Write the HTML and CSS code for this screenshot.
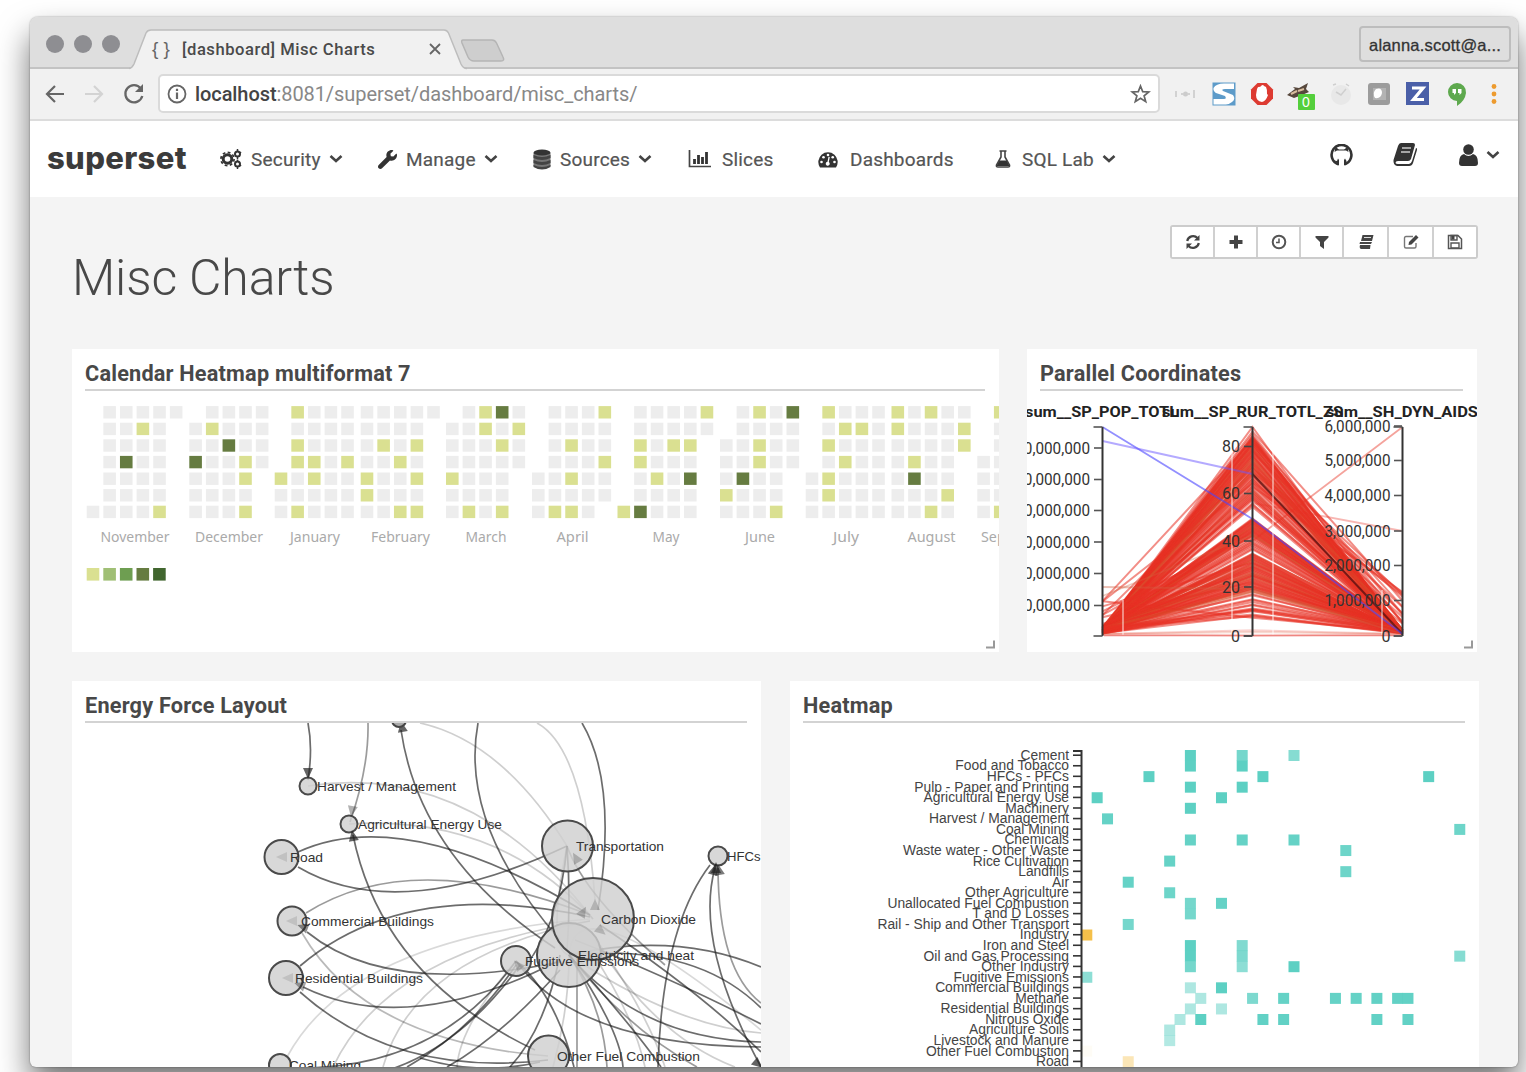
FILE: index.html
```html
<!DOCTYPE html>
<html lang="en">
<head>
<meta charset="utf-8">
<title>[dashboard] Misc Charts</title>
<link rel="stylesheet" href="styles.css">
</head>
<body>
<div class="window">
  <header class="tabbar">
    <span class="lights"><i></i><i></i><i></i></span>
    <div class="tab">
      <svg class="tab-shape" width="370" height="41" viewBox="0 0 370 41"><path d="M0 40 Q3 40 5 35 L17 4 Q18.500 1 22 1 H315 Q318 1 319.500 4 L332 35 Q334 39.500 338 40 V41 H0Z" fill="#f1f1f1"/><path d="M0 39.500 Q3 39 5 35 L17 4 Q18.500 1 22 1 H315 Q318 1 319.500 4 L332 35 Q334 39.500 338 39.500" fill="none" stroke="#bdbdbd" stroke-width="1.500"/><path d="M333 12 H362 Q365 12 366.500 15 L373 29 Q375 33 371 33 H344 Q340 33 338 29 L332 15 Q331 12 333 12Z" transform="translate(1 -1)" fill="#cecece" stroke="#b5b5b5" stroke-width="1.500"/></svg>
      <span class="braces">{ }</span><span class="tab-title">[dashboard] Misc Charts</span>
      <svg class="tab-close" width="12" height="12" viewBox="0 0 12 12"><path d="M1 1 11 11M11 1 1 11" stroke="#666" stroke-width="1.800"/></svg>
    </div>
    <span class="profile">alanna.scott@a...</span>
  </header>

  <div class="toolbar">
    <svg width="20" height="20" viewBox="0 0 20 20"><path d="M19 10H2M10 2 2 10l8 8" fill="none" stroke="#666" stroke-width="2.200"/></svg>
    <svg width="20" height="20" viewBox="0 0 20 20"><path d="M1 10H18M10 2l8 8-8 8" fill="none" stroke="#d3d3d3" stroke-width="2.200"/></svg>
    <svg width="22" height="22" viewBox="0 0 22 22"><path d="M17.800 5.500A8.600 8.600 0 1 0 19.300 13" fill="none" stroke="#666" stroke-width="2.300"/><path d="M20 1v8h-8z" fill="#666"/></svg>
    <div class="address">
      <svg width="20" height="20" viewBox="0 0 20 20"><circle cx="10" cy="10" r="8.500" fill="none" stroke="#666" stroke-width="1.800"/><path d="M10 8.500V15M10 4.700V7" stroke="#666" stroke-width="2.200"/></svg>
      <span class="url"><b>localhost</b>:8081/superset/dashboard/misc_charts/</span>
      <svg class="star" width="21" height="20" viewBox="0 0 21 20"><path d="M10.500 2 12.700 7.600 18.800 8 14.100 11.800 15.700 17.600 10.500 14.300 5.300 17.600 6.900 11.800 2.200 8 8.300 7.600Z" fill="none" stroke="#666" stroke-width="1.700"/></svg>
    </div>
    <div class="extensions">
      <svg width="24" height="24" viewBox="0 0 24 24"><path d="M3 9v6M21 8v8M8 12h2M15 12h2" stroke="#d2d2d2" stroke-width="2"/><circle cx="12.500" cy="12" r="2.500" fill="#ccc"/></svg>
      <svg width="24" height="24" viewBox="0 0 24 24"><path d="M.5.500h23v23H.5z" fill="#5d9bc9"/><path d="M1.500 6Q4 1.500 12 1.500H22V7H13Q9 7 11 9L21 13Q24 17 20 20T13 22.500H1.500V17H12Q15 17 13 14L4 11Q1 9 1.500 6Z" fill="#fff"/></svg>
      <svg width="24" height="24" viewBox="0 0 24 24"><path d="M7.500 1h9L23 7.500v9L16.500 23h-9L1 16.500v-9z" fill="#dd3b32"/><path d="M7 7Q8 4 10 5L11 4Q13 2 14 4L16 5Q17.500 8 17 12L18 13Q16 19 12 20Q6 19 6 13Z" fill="#fff"/></svg>
      <svg width="32" height="32" viewBox="0 0 32 32"><path d="M1 15 9 9 7 7 13 8 22 3 20 9 23 12 16 15 8 18Z" fill="#57483d"/><path d="M5 14 11 11M12 11l6-2" stroke="#d7bc9d" stroke-width="2"/><rect x="12" y="14" width="17" height="16" rx="1" fill="#54cf3c"/><text x="16" y="27" class="badge-text">0</text></svg>
      <svg width="24" height="24" viewBox="0 0 24 24"><circle cx="12" cy="13" r="10" fill="#e8e8e8"/><path d="M7 10 12 13 17 7M4 3l3-1M17 2l3 2" fill="none" stroke="#cfcfcf" stroke-width="1.500"/></svg>
      <svg width="24" height="24" viewBox="0 0 24 24"><rect x="1" y="1" width="22" height="22" rx="3" fill="#9c9c9c"/><path d="M6 6h13v12H6z" fill="#b3b3b3"/><path d="M9 7Q15 5 15 11 14 17 8 16 5 11 9 7Z" fill="#fff"/></svg>
      <svg width="24" height="24" viewBox="0 0 24 24"><path d="M0 0h23v23H0z" fill="#4a5fa8"/><path d="M6 6H17L7.500 17.500H18" fill="none" stroke="#fff" stroke-width="3.200"/></svg>
      <svg width="24" height="24" viewBox="0 0 24 24"><path d="M12 1a9 9 0 0 0 0 18v5q8-5 9-13A9 9 0 0 0 12 1Z" fill="#5ea94e"/><path d="M7.500 7H11v4l-2 2V11H7.500zM13 7h3.500v4l-2 2V11H13z" fill="#fff"/></svg>
      <svg class="menu-dots" width="8" height="24" viewBox="0 0 8 24"><g fill="#ed9b2f"><circle cx="4" cy="4.500" r="2.400"/><circle cx="4" cy="12" r="2.400"/><circle cx="4" cy="19.500" r="2.400"/></g></svg>
    </div>
  </div>

  <nav class="navbar">
    <span class="brand">superset</span>
    <a class="nav-item security"><svg width="22" height="20" viewBox="0 0 22 20"><circle cx="7.500" cy="10" r="4.300" fill="none" stroke="#333" stroke-width="3"/><circle cx="7.500" cy="10" r="6.600" fill="none" stroke="#333" stroke-width="1.700" stroke-dasharray="2.800 2.380"/><circle cx="17.500" cy="5" r="2.500" fill="none" stroke="#333" stroke-width="2"/><circle cx="17.500" cy="15" r="2.500" fill="none" stroke="#333" stroke-width="2"/><path d="M17.500 0v2M17.500 8v2M17.500 10.500v2M17.500 18v2M21 3l-1 1M21 17l-1-1" stroke="#333" stroke-width="1.500"/></svg><span>Security</span><svg class="caret" width="14" height="10" viewBox="0 0 14 10"><path d="M1.500 2 7 7 12.500 2" /></svg></a>
    <a class="nav-item manage"><svg width="19" height="19" viewBox="0 0 512 512"><path fill="#333" d="M507.730 109.100c-2.240-9.030-13.540-12.090-20.120-5.510l-74.360 74.360-67.880-11.310-11.310-67.880 74.360-74.360c6.620-6.620 3.430-17.900-5.660-20.160-47.380-11.740-99.550.91-136.580 37.930-39.640 39.640-50.550 97.100-34.050 147.200L18.740 402.760c-24.990 24.990-24.990 65.510 0 90.500 24.990 24.990 65.510 24.990 90.500 0l213.210-213.210c50.120 16.710 107.470 5.680 147.370-34.220 37.070-37.070 49.700-89.320 37.910-136.730z"/></svg><span>Manage</span><svg class="caret" width="14" height="10" viewBox="0 0 14 10"><path d="M1.500 2 7 7 12.500 2"/></svg></a>
    <a class="nav-item sources"><svg width="18" height="21" viewBox="0 0 18 21"><path d="M.5 4V17Q9 22 17.500 17V4Z" fill="#777"/><ellipse cx="9" cy="3.500" rx="8.500" ry="3" fill="#333"/><path d="M.5 6Q9 10 17.500 6V9Q9 13 .5 9ZM.5 11Q9 15 17.500 11v3Q9 18 .5 14ZM.5 16Q9 20 17.500 16v2Q9 23 .5 18Z" fill="#444"/></svg><span>Sources</span><svg class="caret" width="14" height="10" viewBox="0 0 14 10"><path d="M1.500 2 7 7 12.500 2"/></svg></a>
    <a class="nav-item slices"><svg width="23" height="18" viewBox="0 0 23 18"><path d="M1.500 0V16.500H23" fill="none" stroke="#444" stroke-width="1.700"/><path d="M6.500 14V9M10.500 14V5M14.500 14V7M18.500 14V2" stroke="#333" stroke-width="2.800"/></svg><span>Slices</span></a>
    <a class="nav-item dashboards"><svg width="20" height="17" viewBox="0 0 20 17"><path d="M2 16.500A9.700 9.700 0 1 1 18 16.500Z" fill="#333"/><g fill="#fff"><circle cx="3.500" cy="11" r="1.300"/><circle cx="5.500" cy="6.300" r="1.300"/><circle cx="10" cy="4" r="1.300"/><circle cx="14.700" cy="6.300" r="1.300"/><circle cx="16.500" cy="11" r="1.300"/><path d="m11.800 6-1 5a2 2 0 1 1-1.300-.3l1-5z"/></g></svg><span>Dashboards</span></a>
    <a class="nav-item lab"><svg width="16" height="18" viewBox="0 0 16 18"><path d="M4.500 1h7M6 1v6L1.500 15Q1 17 3 17H13Q15 17 14.500 15L10 7V1" fill="none" stroke="#444" stroke-width="1.600"/><path d="M4.500 10.500h7L14.500 16H1.500Z" fill="#333"/></svg><span>SQL Lab</span><svg class="caret" width="14" height="10" viewBox="0 0 14 10"><path d="M1.500 2 7 7 12.500 2"/></svg></a>
    <div class="nav-right">
      <svg width="23" height="22" viewBox="0 0 23 22"><path d="M8.300 20.200A9.900 9.900 0 1 1 14.700 20.200" fill="none" stroke="#333" stroke-width="2.600"/><path d="M5.500 3 9 5.500H14L17.500 3 18.500 8 16 6.500H7L4.500 8ZM8 14.500 9 16V21.500L6.500 20.500V18.500L3.800 16.500 7 17ZM15 14.500 14 16V21.500L16.500 20.500V17Z" fill="#333"/></svg>
      <svg width="25" height="23" viewBox="0 0 25 23"><path d="M8 0H20Q22 0 22 2L18 16Q17 18 15 18H5Q2.500 18 2.500 20 3 21 5 21H16Q18 21 19 18L23 5Q24.500 5 24 7L20 20Q19 23 16 23H4Q0 22 .5 17L5 3Q6 0 8 0Z" fill="#333"/><path d="M9 5h9M8 9h9" stroke="#ccc" stroke-width="1.500"/></svg>
      <svg width="19" height="22" viewBox="0 0 19 22"><circle cx="9.500" cy="5.500" r="5.300" fill="#333"/><path d="M5 10Q9.500 14 14 10 19 11 19 19 19 22 16 22H3Q0 22 0 19 0 11 5 10Z" fill="#333"/></svg>
      <svg class="caret" width="14" height="10" viewBox="0 0 14 10"><path d="M1.500 2 7 7 12.500 2"/></svg>
    </div>
  </nav>

  <main class="page">
    <div class="page-head">
      <h1>Misc Charts</h1>
      <div class="actions">
        <button><svg viewBox="0 0 16 16"><path d="M2.200 7A6 6 0 0 1 12.500 4M13.800 9A6 6 0 0 1 3.500 12" fill="none" stroke="#444" stroke-width="2.200"/><path d="M14.500 1v5.500H9zM1.500 15V9.500H7z"/></svg></button>
        <button><svg viewBox="0 0 16 16"><path d="M6 1.500h4V6h4.500v4H10v4.500H6V10H1.500V6H6z"/></svg></button>
        <button><svg viewBox="0 0 16 16"><circle cx="8" cy="8" r="6.300" fill="none" stroke="#555" stroke-width="2"/><path d="M8 4.500V8.500H5" fill="none" stroke="#555" stroke-width="1.500"/></svg></button>
        <button><svg viewBox="0 0 16 16"><path d="M1.500 2h13v1.500L10 8v7l-4-3V8L1.500 3.500z"/></svg></button>
        <button><svg viewBox="0 0 16 16"><path d="M4.500 1H15.500L14 7H3zM2 8H14L13 10H1.500zM2 11H12.500L12 15H3Q1 14 2 11z"/><path d="M6 3.500h7" stroke="#ddd"/></svg></button>
        <button><svg viewBox="0 0 16 16"><path d="M10 2.500H3Q1.500 2.500 1.500 4v8.500Q1.500 14 3 14h8.500Q13 14 13 12.500V9" fill="none" stroke="#777" stroke-width="1.400"/><path d="m6 8 7-7 2.500 2.500-7 7L5.500 11z"/></svg></button>
        <button><svg viewBox="0 0 16 16"><path d="M1.500 1.500h9.500l3.500 3.500v9.500h-13z" fill="none" stroke="#555" stroke-width="1.500"/><path d="M4 1.500h6v4.500H4zM4 9h8v5H4z" fill="none" stroke="#555" stroke-width="1.400"/><path d="M4.500 2h3v3.500h-3z"/></svg></button>
      </div>
    </div>
    <div class="row row-top">
      <section class="card"><h2>Calendar Heatmap multiformat 7</h2><svg id="calendar" width="927" height="261" viewBox="72 391 927 261"></svg></section>
      <section class="card"><h2>Parallel Coordinates</h2><svg id="parallel" width="450" height="261" viewBox="1027 391 450 261"></svg></section>
    </div>
    <div class="row row-bottom">
      <section class="card"><h2>Energy Force Layout</h2><svg id="force" width="689" height="344" viewBox="72 723 689 344"></svg></section>
      <section class="card"><h2>Heatmap</h2><svg id="heatmap" width="689" height="344" viewBox="790 723 689 344"></svg></section>
    </div>
  </main>
</div>
<script src="charts.js"></script>
</body>
</html>
```

FILE: styles.css
```css
* { box-sizing: border-box; }
body {
  margin: 0;
  width: 1526px;
  height: 1072px;
  overflow: hidden;
  background: #fff;
  font-family: Roboto, "Liberation Sans", sans-serif;
  color: #444;
}
.window {
  width: 1488px;
  height: 1050px;
  margin: 17px 0 0 30px;
  overflow: hidden;
  border-radius: 8px 8px 6px 6px;
  background: #f4f4f4;
  box-shadow: 0 0 2px rgba(0,0,0,.4), 0 18px 32px rgba(0,0,0,.55);
}
svg { display: block; flex: none; }

.tabbar {
  display: flex;
  height: 52px;
  padding-left: 16px;
  background: #dedede;
  border-bottom: 2px solid #c3c3c3;
}
.lights { display: flex; gap: 10px; width: 84px; padding-top: 18px; }
.lights i { width: 18px; height: 18px; border-radius: 50%; background: #8e8e92; }
.tab { position: relative; display: flex; align-items: center; width: 380px; height: 41px; margin-top: 12px; padding: 0 0 1px 22px; }
.tab-shape { position: absolute; left: -1px; top: 0; overflow: visible; }
.braces, .tab-title, .tab-close { position: relative; }
.braces { width: 30px; font: 19px "Liberation Sans", sans-serif; color: #666; white-space: nowrap; }
.tab-title { width: 247px; font: 500 16.600px Roboto, sans-serif; letter-spacing: .52px; color: #4a4a4a; white-space: nowrap; }
.profile {
  width: 152px; height: 36px; margin: 9px 7px 0 auto; padding-left: 8px;
  border: 2px solid #bdbdbd; border-radius: 4px;
  font: 16.500px/34px "Liberation Sans", sans-serif; letter-spacing: .2px; color: #333; -webkit-text-stroke: .3px #333; white-space: nowrap;
}

.toolbar {
  display: flex;
  align-items: center;
  height: 52px;
  padding: 0 20px 1px 15px;
  gap: 19px;
  background: #f1f1f1;
  border-bottom: 2px solid #dcdcdc;
}
.address {
  display: flex;
  align-items: center;
  width: 1002px;
  height: 39px;
  margin-left: -6px;
  padding: 0 7px;
  border: 2px solid #dadada;
  border-radius: 5px;
  background: #fff;
}
.url { margin-left: 8px; font: 20px Roboto, sans-serif; letter-spacing: -.08px; color: #888; white-space: nowrap; }
.url b { font-weight: 500; color: #444; }
.star { margin-left: auto; }
.extensions { display: flex; align-items: center; gap: 14.700px; margin-left: -6px; }
.extensions svg:nth-child(4) { margin: 4px -4px 0 -3px; }
.extensions .menu-dots { margin-left: 6px; }
.badge-text { font: 14px "Liberation Sans", sans-serif; fill: #fff; }

.navbar { display: flex; height: 76px; padding-left: 17px; background: #fff; }
.brand { width: 173px; font: 800 31px/74px Inter, sans-serif; letter-spacing: .35px; color: #3b3b3b; }
.nav-item { display: flex; align-items: center; height: 76px; font-size: 19px; letter-spacing: .2px; color: #555; -webkit-text-stroke: .2px #555; }
.nav-item span { white-space: nowrap; }
.caret { margin-left: 8px; fill: none; stroke: #444; stroke-width: 2.600; }
.security { width: 158px; }
.security span { margin-left: 9px; }
.manage { width: 155px; }
.manage span { margin-left: 9px; }
.sources { width: 155px; }
.sources span { margin-left: 9px; }
.slices { width: 130px; }
.slices span { margin-left: 11px; }
.dashboards { width: 177px; }
.dashboards span { margin-left: 12px; }
.lab span { margin-left: 11px; }
.nav-right { display: flex; align-items: center; margin-left: auto; padding: 0 18px 9px 0; }
.nav-right svg:nth-child(2) { margin-left: 40px; }
.nav-right svg:nth-child(3) { margin-left: 41px; }

.page { padding: 28px 0 0 42px; }
.page-head { display: flex; justify-content: space-between; height: 124px; padding-right: 40px; }
h1 { margin: 28px 0 0; font: 300 50px/50px Roboto, sans-serif; letter-spacing: -.15px; color: #484848; }
.actions { display: flex; height: 34px; border: 2px solid #ccc; border-radius: 3px; background: #fff; }
.actions button { display: grid; place-items: center; width: 43px; padding: 0; border: 0; border-right: 2px solid #d0d0d0; background: #fff; }
.actions button:nth-child(n+5) { width: 45px; }
.actions button:last-child { width: 42px; border-right: 0; }
.actions svg { width: 16px; height: 16px; fill: #444; }
.row { display: flex; gap: 28px; }
.row-bottom { margin-top: 29px; gap: 29px; }
.card { overflow: hidden; background: #fff; }
h2 {
  height: 42px; margin: 0 14px 0 13px; padding-top: 10px;
  border-bottom: 2px solid #d3d3d3;
  font: 700 21.700px/30px Roboto, sans-serif; letter-spacing: .2px; color: #484848; white-space: nowrap;
}
.month { font: 14px "Noto Sans", sans-serif; fill: #aaa; text-anchor: middle; }
.tick { font: 16px Roboto, sans-serif; fill: #333; text-anchor: end; }
.dim { font: 700 15.500px Roboto, sans-serif; fill: #222; }
.node { font: 13.600px "Liberation Sans", sans-serif; fill: #333; }
.row-name { font: 13.850px "Liberation Sans", sans-serif; fill: #444; text-anchor: end; }
```

FILE: charts.js
```js
const NS = 'http://www.w3.org/2000/svg';
function add(parent, name, attrs, text) {
  const el = document.createElementNS(NS, name);
  for (const k in attrs) el.setAttribute(k, attrs[k]);
  if (text !== undefined) el.textContent = text;
  parent.appendChild(el);
  return el;
}
function line(parent, x1, y1, x2, y2, stroke, width, extra) {
  return add(parent, 'line', Object.assign({ x1, y1, x2, y2, stroke, 'stroke-width': width }, extra));
}

// Calendar: one string per week column, one letter per weekday
const cal = document.getElementById('calendar');
const fills = { g: '#ededed', y: '#dae091', d: '#667c41' };
const months = [
  [86.7, '......g ggggggg gggdggg gyggggg ggggggy g......', 'November', 135, 69],
  [189.3, '.ggdggg gyggggg ggdgggg gggyygy gggg...', 'December', 229, 68],
  [274.7, '....ygg ygyyggy gggyygg ggggggg gggyggg', 'January', 315, 50],
  [360.7, 'ggggyyg ggygggg gggyggy ggygygy g......', 'February', 400.5, 59],
  [446, '.gggygg ggggggy yyggggg dgygggy gygg...', 'March', 486, 41],
  [532, '....ggg ggggggy ggygygy ggggggg yggygg.', 'April', 572.5, 32],
  [617.5, '......y ggyyggd ggggygg ggygggg ggygdgg yg.....', 'May', 666, 27],
  [720, '..gggyg ggggdgg ygyyggg ggggggy dggg...', 'June', 760, 30],
  [805.7, '....ggg ygygyyg gygyggg gyggggg ggggggg', 'July', 846, 26],
  [891.5, 'yyggggg gggydgg ygggggy gggggyg gyy....', 'August', 931.5, 48],
  [977.3, '...gggg ygggggy ggggggg', 'September', 1018, 74]
];
for (const [x, weeks, name, cx, w] of months) {
  weeks.split(' ').forEach((week, c) => [...week].forEach((v, r) => {
    if (v !== '.') add(cal, 'rect', { x: x + c * 16.63, y: 406.1 + r * 16.6, width: 12.6, height: 12.4, fill: fills[v] });
  }));
  add(cal, 'text', { x: cx, y: 541.5, class: 'month', textLength: w, lengthAdjust: 'spacingAndGlyphs' }, name);
}
['#dae091', '#a0bf75', '#6e9e51', '#667c41', '#41662f'].forEach((fill, i) =>
  add(cal, 'rect', { x: 86.7 + i * 16.6, y: 568, width: 12.6, height: 12.6, fill }));
function grip(svg, x, y) {
  add(svg, 'path', { d: `M${x} ${y - 7}V${y}H${x - 8}`, fill: 'none', stroke: '#999', 'stroke-width': 2 });
}
grip(cal, 994, 647.5);

// Parallel coordinates
const par = document.getElementById('parallel');
const X = [1102.5, 1252.5, 1402.5], TOP = 427, BOT = 636;
let seed = 11;
const rnd = () => (seed = (seed * 16807) % 2147483647) / 2147483647;
const bands = [[427, 436, 3], [436, 446, 14], [446, 476, 32], [477, 501, 20], [502, 508, 3], [518, 536, 26], [536, 550, 10], [553, 592, 52], [594, 596, 2], [599, 602, 3], [604, 606, 2], [608, 612, 5], [614, 618, 4], [630, 636, 3]];
bands.forEach(([a, b, n], k) => {
  for (let i = 0; i < n; i++) {
    const m = a + (b - a) * (i + rnd()) / n;
    const l = BOT - 2 - (k < 13 ? rnd() * 7 + (rnd() < .07 ? rnd() * 30 : 0) : 0);
    const r = BOT - 2 - (k < 13 ? rnd() * 4 + (m < 500 && rnd() < .22 ? rnd() * 45 : 0) : 0);
    add(par, 'polyline', { points: `${X[0]},${l} ${X[1]},${m} ${X[2]},${r}`, fill: 'none', stroke: rnd() < .12 ? '#d9502e' : '#e73224', 'stroke-width': 2, 'stroke-opacity': k === 13 ? .22 : .55 });
  }
});
const fan = (y0, y1, y2, c, o) => add(par, 'polyline', { points: `${X[0]},${y0} ${X[1]},${y1} ${X[2]},${y2}`, fill: 'none', stroke: c, 'stroke-width': 1.8, 'stroke-opacity': o });
fan(632, 541, 427, '#e73224', .45);
fan(630, 503, 531, '#e73224', .35);
fan(587, 589, 634, '#d06040', .4);
fan(596, 535, 630, '#d06040', .35);
add(par, 'path', { d: 'M1252.5 474 1402.5 634', fill: 'none', stroke: '#501010', 'stroke-width': 2, 'stroke-opacity': .75 });
fan(427, 519, 634, '#4a45ff', .6);
add(par, 'path', { d: 'M1102.5 441 1252.5 474', fill: 'none', stroke: '#6a55ff', 'stroke-width': 1.8, 'stroke-opacity': .5 });
for (const [x, a] of [[1123, 600], [1232, 440], [1273, 445], [1382, 590]]) line(par, x, a, x, BOT, '#fff', 1.5, { 'stroke-opacity': .6 });
line(par, 1104, 635.5, 1400, 635.5, '#ef8580', 1.5);
for (const x of X) {
  line(par, x, TOP, x, BOT, '#333', 2);
  line(par, x - 9, TOP, x, TOP, '#555', 1.6);
  line(par, x - 9, BOT, x, BOT, '#555', 1.6);
}
[[448, '1,200,000,000', 95], [479.5, '1,000,000,000', 95], [510.5, '800,000,000', 83], [542, '600,000,000', 83], [573.5, '400,000,000', 83], [605.5, '200,000,000', 83]].forEach(([y, t, w]) => {
  line(par, 1094, y, 1102, y, '#555', 1.6);
  add(par, 'text', { x: 1090, y: y + 5.5, class: 'tick', textLength: w, lengthAdjust: 'spacingAndGlyphs' }, t);
});
[['80', 446.5], ['60', 493.5], ['40', 541], ['20', 587], ['0', 636]].forEach(([t, y]) => {
  line(par, 1244, y, 1252, y, '#444', 1.6);
  add(par, 'text', { x: 1240, y: y + 5.5, class: 'tick' }, t);
});
[['6,000,000', 426], ['5,000,000', 460.5], ['4,000,000', 495.5], ['3,000,000', 531], ['2,000,000', 565.5], ['1,000,000', 600.5], ['0', 636]].forEach(([t, y]) => {
  line(par, 1394, y, 1402, y, '#555', 1.6);
  add(par, 'text', Object.assign({ x: 1390.5, y: y + 5.5, class: 'tick' }, t === '0' ? {} : { textLength: 66, lengthAdjust: 'spacingAndGlyphs' }), t);
});
[['sum__SP_POP_TOTL', 1025, 153], ['sum__SP_RUR_TOTL_ZS', 1162, 181], ['sum__SH_DYN_AIDS', 1326, 152]].forEach(([t, x, w]) =>
  add(par, 'text', { x, y: 417, class: 'dim', textLength: w, lengthAdjust: 'spacingAndGlyphs' }, t));
grip(par, 1472, 647.5);

// Force layout: start, point on the curve, end, shade
const force = document.getElementById('force');
const D = .62, M = .42, L = .2;
const links = [
  [308,723,310.500,750,308,780,D],[368,723,364,770,350,822,M],[401,730,449,849,555,948,D],[478,723,489,828,560,940,D],
  [420,723,498,763,567,846,L],[537,723,575,780,595,900,L],[582,723,604,800,598,910,D],
  [298,852,425,843,590,915,D],[298,867,415,891,567,846,D],[306,913,430,880,590,915,M],[300,966,425,909,590,917,D],
  [307,932,410,972,560,962,D],[303,987,420,1006,560,960,D],[300,992,410,1052,548,1060,D],[353,835,413,960,535,1050,D],
  [302,933,395,1018,548,1056,M*.7],[287,1057,395,963,590,919,L*.8],[333,1067,425,972,590,921,L],[383,1067,450,975,590,921,L],
  [310,1068,428,1039,516,961,D],[350,1078,440,1045,520,965,D],[407,1067,467,1023,516,965,D],[447,1067,503,1027,560,970,D],[510,1067,540,1020,560,955,D],
  [457,1067,473,1020,516,961,L],
  [420,1058,480,1068,540,1062,D],
  [516,961,608,1025,761,1047,D],[516,961,550,1004,574,1067,D],[569,955,653,1019,761,1042,D],[575,940,665,978,761,1024,D],
  [600,925,690,990,761,1052,D],[569,955,670,946,761,967,D],[569,955,680,962,761,1008,D],
  [569,955,608,1020,623,1067,D],[569,955,625,1020,661,1067,D],[577,955,577,1010,577,1067,M],[569,955,596,1010,607,1067,M],
  [569,955,565,1010,553,1067,L],[569,955,630,1020,697,1067,M],[569,955,670,1010,761,1033,L],[600,945,640,1010,665,1067,L],[590,950,625,1010,645,1067,L],[595,940,660,1020,735,1067,L],
  [710,865,673,947,658,1067,D],[715,868,716,955,761,1067,D],[718,868,729,953,761,1003,M],
  [567,846,553,915,525,966,D],[567,846,569,900,567,950,D],[567,846,600,900,665,965,M],
  [308,786,461,807,593,919,L],[349,824,485,843,593,919,L],[569,955,557,925,567,846,L],[569,955,620,935,761,1030,L*.8]
];
for (const [x0, y0, mx, my, x1, y1, o] of links) {
  const cx = 2 * mx - (x0 + x1) / 2, cy = 2 * my - (y0 + y1) / 2;
  add(force, 'path', { d: `M${x0} ${y0}Q${cx} ${cy} ${x1} ${y1}`, fill: 'none', stroke: '#111', 'stroke-width': 1.7, 'stroke-opacity': o });
}
const nodes = [
  [308,786,8.500,'Harvest / Management',317,139],[349,824,8.500,'Agricultural Energy Use',358,144],[281.500,857,17,'Road',290,33],
  [292,921,14.500,'Commercial Buildings',301,133],[286,978,17,'Residential Buildings',295,128],[280,1065,11,'Coal Mining',289,72],
  [567.500,846,25.500,'Transportation',576,88],[569,955,32,'Electricity and heat',578,116],[593,919,41,'Carbon Dioxide',601,95],
  [516,961,15,'Fugitive Emissions',525,114],[548.500,1056,20.500,'Other Fuel Combustion',557,143],[718,856,9.500,'HFCs - PFCs',727,78]
];
for (const [cx, cy, r] of nodes)
  add(force, 'circle', { cx, cy, r, fill: '#cfcfcf', 'fill-opacity': .82, stroke: '#4a4a4a', 'stroke-width': 2 });
const arrows = [[308,773,90,.7],[352,811,100,.35],[353,836,-100,.7],[402,727,-100,.7],[714,870,-75,.7],[716,868,-90,.7],[719,870,-100,.6],[303,927,200,.5],[300,985,200,.4],[282,857,180,.12],[292,921,180,.12],[288,978,180,.12],[576,858,-120,.25],[583,912,-60,.25],[595,905,-90,.2],[601,931,40,.2],[518,965,-130,.2],[758,1064,40,.7]];
for (const [x, y, a, o] of arrows)
  add(force, 'path', { d: 'M6 0 -5 -5V5Z', transform: `translate(${x} ${y}) rotate(${a})`, fill: '#222', 'fill-opacity': o });
add(force, 'circle', { cx: 399, cy: 720, r: 7, fill: '#aaa', stroke: '#444', 'stroke-width': 2 });
for (const [, cy, , t, x, w] of nodes)
  add(force, 'text', { x, y: cy + 4.8, class: 'node', textLength: w, lengthAdjust: 'spacingAndGlyphs' }, t);

// Heatmap: [column, strength] pairs per row
const heat = document.getElementById('heatmap');
const rows = [
  ['Cement', [10, 1], [15, .85], [20, .75]], ['Food and Tobacco', [10, 1], [15, 1]], ['HFCs - PFCs', [6, 1], [17, 1], [33, 1]],
  ['Pulp - Paper and Printing', [10, 1], [15, 1]], ['Agricultural Energy Use', [1, 1], [13, 1]], ['Machinery', [10, 1]],
  ['Harvest / Management', [2, .95]], ['Coal Mining', [36, .9]], ['Chemicals', [10, .95], [15, .95], [20, .95]],
  ['Waste water - Other Waste', [25, .9]], ['Rice Cultivation', [8, .95]], ['Landfills', [25, .9]], ['Air', [4, .95]],
  ['Other Agriculture', [8, .9]], ['Unallocated Fuel Combustion', [10, .85], [13, .95]], ['T and D Losses', [10, .85]],
  ['Rail - Ship and Other Transport', [4, .85]], ['Industry', [0, 1, '#f5c04a']], ['Iron and Steel', [10, 1], [15, .78]],
  ['Oil and Gas Processing', [10, 1], [15, .8], [36, .75]], ['Other Industry', [10, .85], [15, .7], [20, 1]], ['Fugitive Emissions', [0, .7]],
  ['Commercial Buildings', [10, .5], [13, 1]], ['Methane', [11, .5], [16, .8], [19, .95], [24, .95], [26, .95], [28, .97], [30, .97], [31, .97]],
  ['Residential Buildings', [10, .5], [13, .5]], ['Nitrous Oxide', [9, .5], [11, 1], [17, .97], [19, .97], [28, .97], [31, .97]],
  ['Agriculture Soils', [8, .5]], ['Livestock and Manure', [8, .47]], ['Other Fuel Combustion', [0, .05, '#f5c04a']], ['Road', [4, .4, '#f5c04a']]
];
rows.forEach(([name, ...cells], i) => {
  const y = 755.2 + i * 10.56;
  for (const [c, o, fill] of cells)
    add(heat, 'rect', { x: 1081.3 + c * 10.36, y: y - 5.2, width: 11, height: 11, fill: fill || '#5dd0c3', 'fill-opacity': o });
  line(heat, 1073, y, 1082, y, '#333', 1.6);
  add(heat, 'text', { x: 1069, y: y + 4.7, class: 'row-name' }, name);
});
add(heat, 'path', { d: 'M1073 751H1081.5V1067', fill: 'none', stroke: '#333', 'stroke-width': 2 });
```
